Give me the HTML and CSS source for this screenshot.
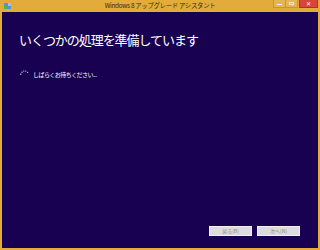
FILE: index.html
```html
<!DOCTYPE html>
<html lang="ja">
<head>
<meta charset="utf-8">
<link rel="stylesheet" href="styles.css">
</head>
<body>
<div class="window">
  <div class="titlebar">
    <svg class="appicon" width="7" height="6" viewBox="0 0 7 6">
      <rect x="0" y="0" width="7" height="6" fill="#5b8fd6"/>
      <rect x="0" y="3" width="4" height="3" fill="#4fb34a"/>
      <rect x="4" y="0" width="3" height="3" fill="#8ec7f0"/>
    </svg>
    <div class="title">Windows 8 アップグレード アシスタント</div>
    <div class="controls">
      <div class="ctl min"><span class="bar"></span></div>
      <div class="ctl max"><span class="box"></span></div>
      <div class="ctl close">✕</div>
    </div>
  </div>
  <div class="content">
    <h1 class="heading">いくつかの処理を準備しています</h1>
    <div class="status">
      <svg class="spinner" width="9" height="5" viewBox="0 0 9 5">
        <circle cx="0.8" cy="4.2" r="0.6" fill="#fff"/>
        <circle cx="2" cy="2.2" r="0.6" fill="#fff"/>
        <circle cx="3.8" cy="1" r="0.6" fill="#fff"/>
        <circle cx="5.8" cy="1" r="0.6" fill="#fff"/>
        <circle cx="7.6" cy="2.4" r="0.6" fill="#fff" opacity="0.7"/>
      </svg>
      <span class="status-text">しばらくお待ちください...</span>
    </div>
    <div class="spacer"></div>
    <div class="buttons">
      <button class="btn">戻る(B)</button>
      <button class="btn">次へ(N)</button>
    </div>
  </div>
</div>
</body>
</html>
```
FILE: styles.css
```css
html, body {
  margin: 0;
  padding: 0;
  width: 320px;
  height: 250px;
  overflow: hidden;
  font-family: "Noto Sans CJK JP", "Noto Sans", sans-serif;
}
.window {
  width: 320px;
  height: 250px;
  box-sizing: border-box;
  background: #e2ab3a;
  display: flex;
  flex-direction: column;
  padding: 0 2px 2px 2px;
}
.titlebar {
  height: 12px;
  display: flex;
  align-items: flex-start;
  position: relative;
  flex: none;
}
.appicon {
  margin: 3px 0 0 2px;
}
.title {
  position: absolute;
  left: 0;
  right: 0;
  top: 1px;
  text-align: center;
  font-size: 6.4px;
  letter-spacing: -0.3px;
  line-height: 9px;
  color: #3a2a10;
  font-family: "Noto Sans CJK JP", sans-serif;
}
.controls {
  margin-left: auto;
  display: flex;
  height: 8px;
  margin-right: 0;
  position: relative;
}
.ctl {
  width: 13px;
  height: 8px;
  box-sizing: border-box;
  border: 1px solid #c89530;
  border-top: none;
  background: #e6b550;
  display: flex;
  align-items: center;
  justify-content: center;
}
.ctl.max { margin-left: -1px; }
.ctl .bar {
  width: 5px;
  height: 1px;
  background: #fff;
  margin-top: 2px;
}
.ctl .box {
  width: 5px;
  height: 3px;
  border: 1px solid #fff;
  box-sizing: border-box;
  opacity: 0.7;
}
.ctl.close {
  width: 19px;
  margin-left: 1px;
  background: #d9453a;
  border-color: #b23228;
  color: #fff;
  font-size: 6px;
  line-height: 8px;
  font-family: "DejaVu Sans", sans-serif;
}
.content {
  flex: 1;
  background: #190152;
  display: flex;
  flex-direction: column;
  padding: 0 0 0 17px;
}
.heading {
  margin: 19px 0 0 0;
  font-size: 13px;
  letter-spacing: -1.05px;
  line-height: 17px;
  font-weight: normal;
  color: #fff;
}
.status {
  display: flex;
  align-items: center;
  margin-top: 21px;
  height: 10px;
}
.spinner {
  margin-left: 1px;
  margin-right: 4px;
  margin-top: -3px;
}
.status-text {
  font-size: 6px;
  color: #fff;
  letter-spacing: -0.55px;
}
.spacer { flex: 1; }
.buttons {
  display: flex;
  justify-content: flex-end;
  gap: 5px;
  padding-right: 18px;
  margin-bottom: 12px;
}
.btn {
  width: 43px;
  height: 10px;
  padding: 0;
  border: 1px solid #f0f0f0;
  background: #dcdcdc;
  color: #8a8a8a;
  font-size: 5px;
  font-family: "Noto Sans CJK JP", sans-serif;
  line-height: 8px;
}
```
